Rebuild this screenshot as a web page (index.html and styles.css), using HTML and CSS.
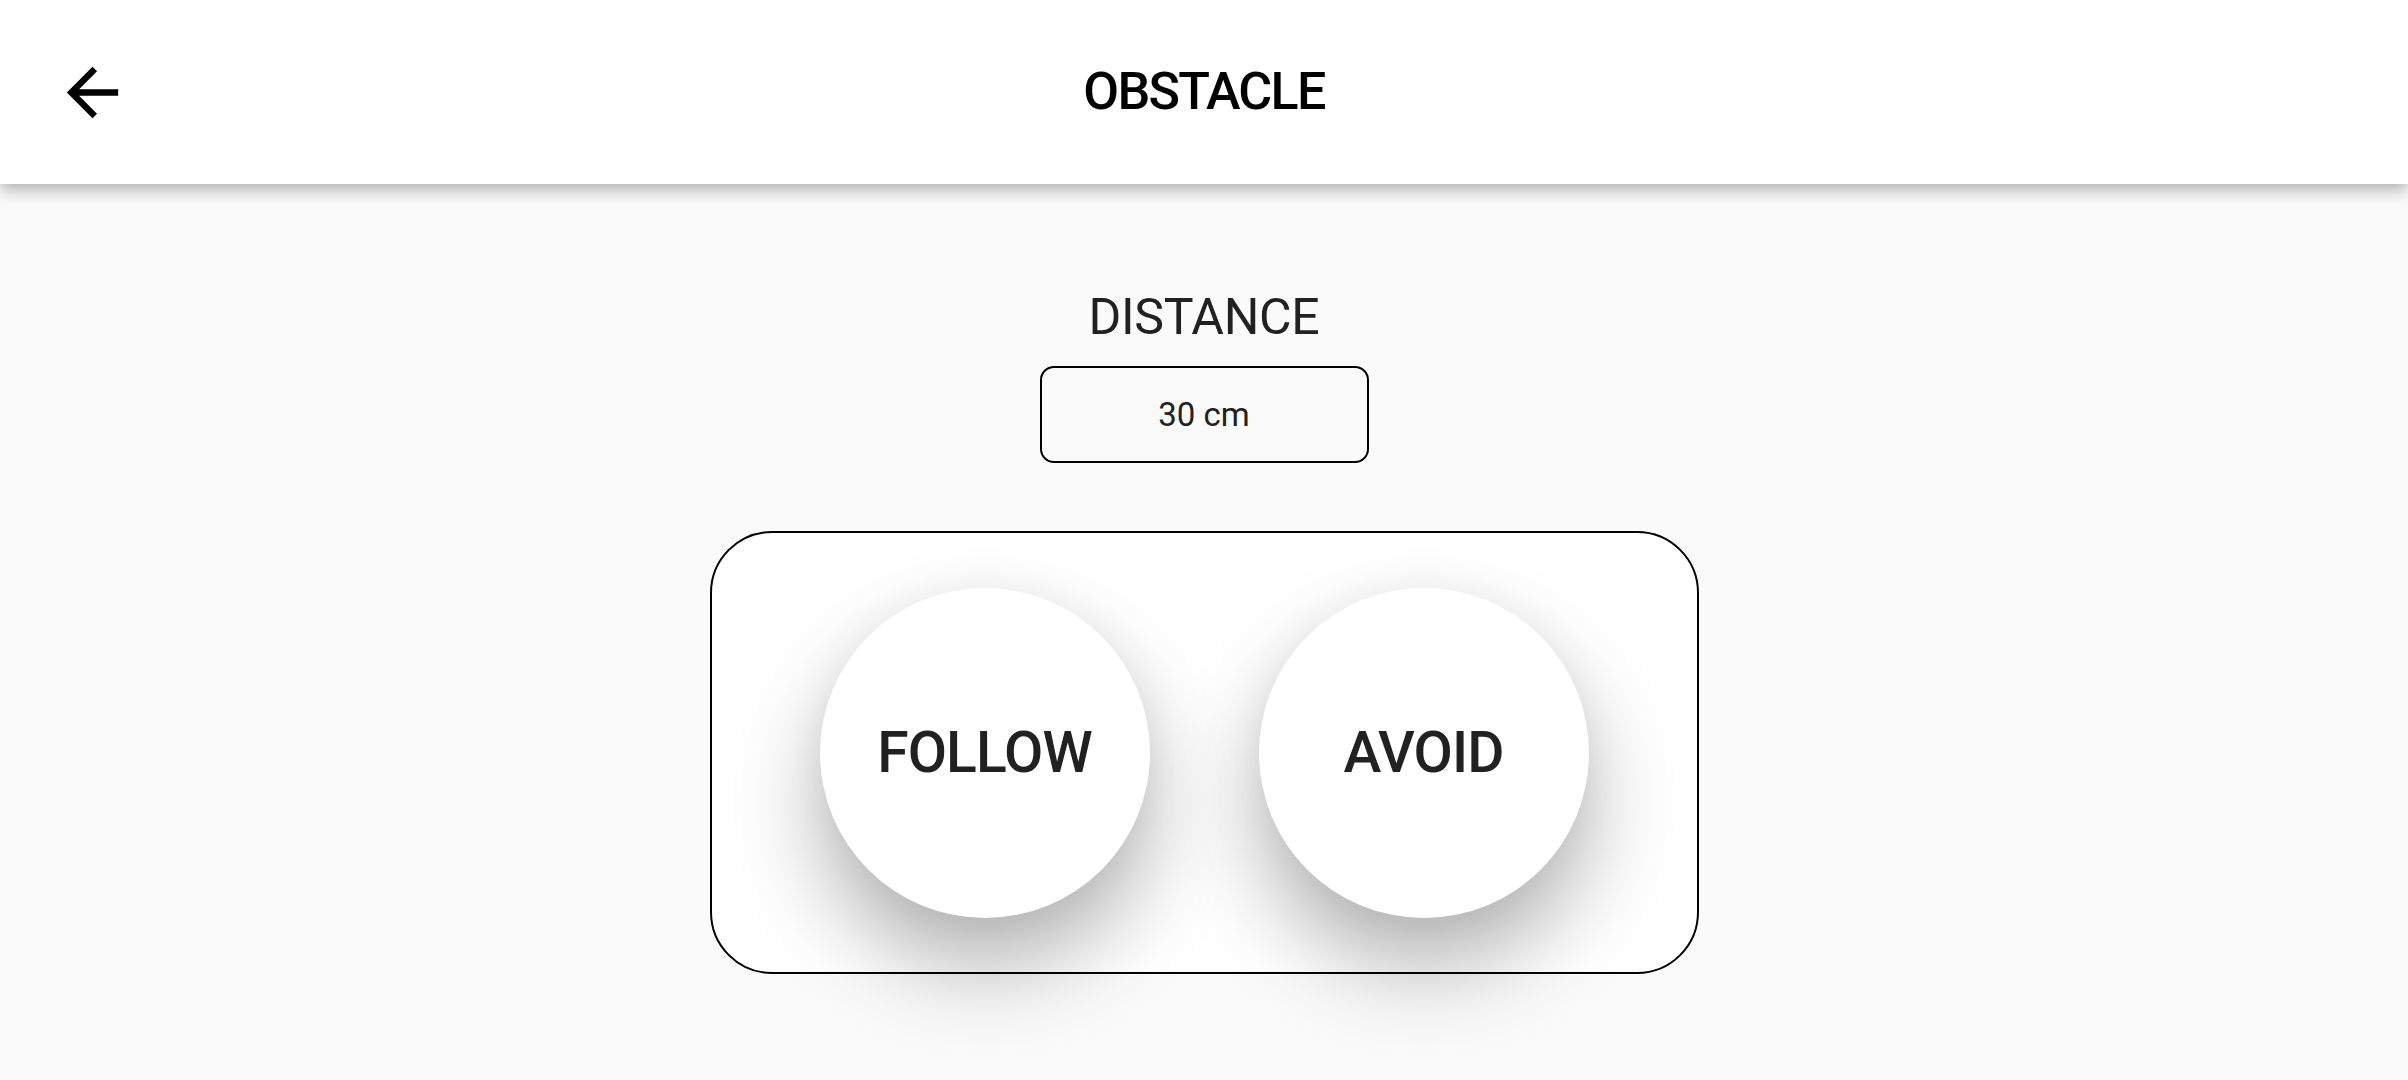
FILE: index.html
```html
<!DOCTYPE html>
<html lang="en">
<head>
<meta charset="utf-8">
<title>Obstacle</title>
<link rel="stylesheet" href="styles.css">
</head>
<body>
<header class="app-bar">
  <button class="back" aria-label="Back">
    <svg viewBox="0 0 24 24" width="77" height="77"><path d="M20 11H7.83l5.59-5.59L12 4l-8 8 8 8 1.41-1.41L7.83 13H20v-2z" fill="#000"/></svg>
  </button>
  <h1 class="title">OBSTACLE</h1>
</header>
<main class="content">
  <div class="label">DISTANCE</div>
  <div class="field">30 cm</div>
  <section class="panel">
    <button class="mode">FOLLOW</button>
    <button class="mode">AVOID</button>
  </section>
</main>
</body>
</html>
```
FILE: styles.css
```css
* { box-sizing: border-box; }
html, body { margin: 0; padding: 0; }
body {
  width: 2408px;
  height: 1080px;
  overflow: hidden;
  background: #fafafa;
  font-family: Roboto, "Noto Sans", sans-serif;
  color: #212121;
}
.app-bar {
  position: relative;
  z-index: 2;
  height: 184px;
  background: #fff;
  display: flex;
  align-items: center;
  justify-content: center;
  box-shadow: 0 5px 16px rgba(0,0,0,0.32);
}
.back {
  position: absolute;
  left: 54px;
  top: 54px;
  width: 77px;
  height: 77px;
  padding: 0;
  border: 0;
  background: none;
  display: flex;
}
.title {
  margin: 0;
  font-size: 52px;
  font-weight: 500;
  letter-spacing: -1.7px;
  color: #000;
  line-height: 60px;
}
.content {
  display: flex;
  flex-direction: column;
  align-items: center;
  padding-top: 103px;
}
.label {
  font-size: 50px;
  line-height: 60px;
  font-weight: 400;
  letter-spacing: -0.3px;
  color: #212121;
}
.field {
  margin-top: 19px;
  width: 329px;
  height: 97px;
  border: 2px solid #000;
  border-radius: 14px;
  display: flex;
  align-items: center;
  justify-content: center;
  font-size: 33px;
  color: #212121;
}
.panel {
  margin-top: 68px;
  width: 989px;
  height: 443px;
  border: 2px solid #000;
  border-radius: 62px;
  background: #fff;
  display: flex;
  align-items: center;
  justify-content: center;
  gap: 109px;
}
.mode {
  width: 330px;
  height: 330px;
  border-radius: 50%;
  border: 0;
  background: #fff;
  font-family: Roboto, "Noto Sans", sans-serif;
  font-size: 57px;
  font-weight: 500;
  letter-spacing: -0.9px;
  color: #212121;
  padding: 0;
  box-shadow: 0 48px 90px rgba(0,0,0,0.3), 0 0 40px rgba(0,0,0,0.04);
}
```
